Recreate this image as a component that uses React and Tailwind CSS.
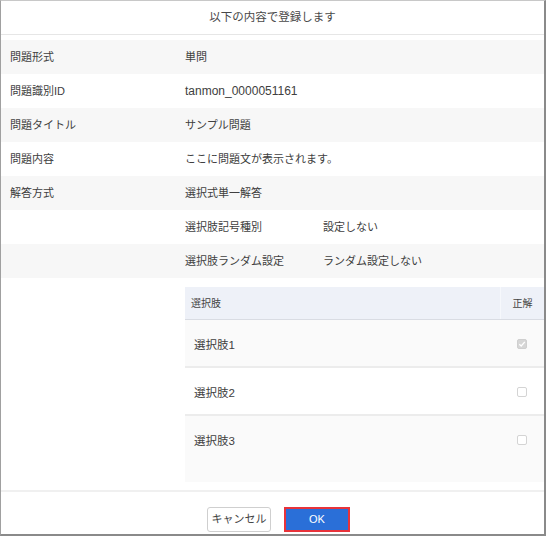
import React from "react";

const rows = [
    { label: "問題形式", value: "単問" },
    { label: "問題識別ID", value: "tanmon_0000051161" },
    { label: "問題タイトル", value: "サンプル問題" },
    { label: "問題内容", value: "ここに問題文が表示されます。" },
    { label: "解答方式", value: "選択式単一解答" },
];

const subRows = [
    { label: "選択肢記号種別", value: "設定しない" },
    { label: "選択肢ランダム設定", value: "ランダム設定しない" },
];

const choices = [
    { name: "選択肢1", correct: true, h: "h-[48px]", bg: "bg-[#fafafa]" },
    { name: "選択肢2", correct: false, h: "h-[48px]", bg: "bg-white" },
    { name: "選択肢3", correct: false, h: "h-[66px]", bg: "bg-[#fafafa]" },
];

function CheckBox({ checked }) {
    if (checked) {
        return (
            <div className="w-[10px] h-[10px] rounded-[2px] bg-[#d6d6d6] border border-[#cfcfcf] flex items-center justify-center">
                <svg width="8" height="8" viewBox="0 0 8 8">
                    <path d="M1.3 4.2 L3.2 6 L6.8 1.8" stroke="#fff" strokeWidth="1.3" fill="none" />
                </svg>
            </div>
        );
    }
    return <div className="w-[10px] h-[10px] rounded-[2px] bg-white border border-[#d4d4d4]"></div>;
}

export default function App() {
    return (
        <div
            className="w-[546px] h-[536px] bg-white border-l border-t border-r-2 border-b-2 border-l-[#a0a0a0] border-t-[#c8c8c8] border-r-[#8a8a8a] border-b-[#8a8a8a] flex flex-col text-[#404040] text-[11px]"
            style={{ fontFamily: '"Liberation Sans", "Noto Sans CJK JP", sans-serif' }}
        >
            <div className="h-[34px] shrink-0 border-b border-[#e6e6e6] flex items-center justify-center text-[11.5px] text-[#484848]">
                以下の内容で登録します
            </div>

            <div className="mt-[5px] flex flex-col">
                {rows.map((r, i) => (
                    <div key={r.label} className={"h-[34px] flex items-center " + (i % 2 === 0 ? "bg-[#f7f7f7]" : "bg-white")}>
                        <div className="w-[184px] pl-[9px]">{r.label}</div>
                        <div className={r.label === "問題識別ID" ? "text-[12px]" : ""}>{r.value}</div>
                    </div>
                ))}
                {subRows.map((r, i) => (
                    <div key={r.label} className={"h-[34px] flex items-center " + (i % 2 === 0 ? "bg-white" : "bg-[#f7f7f7]")}>
                        <div className="w-[184px]"></div>
                        <div className="w-[138px]">{r.label}</div>
                        <div>{r.value}</div>
                    </div>
                ))}
            </div>

            <div className="mt-[9px] ml-[184px] flex flex-col">
                <div className="h-[33px] flex bg-[#eef1f8] border-b border-[#d9dce3] text-[10px] text-[#444]">
                    <div className="flex-1 flex items-center pl-[6px]">選択肢</div>
                    <div className="w-[44px] flex items-center justify-center border-l border-[#f6f8fc]">正解</div>
                </div>
                {choices.map((c, i) => (
                    <div key={c.name} className={"flex " + c.h + " " + c.bg + (i < choices.length - 1 ? " border-b-2 border-[#ececec]" : "")}>
                        <div className="flex-1 pl-[9px] pt-[17px] text-[11.5px]">{c.name}</div>
                        <div className="w-[44px] flex justify-center pt-[19px]">
                            <CheckBox checked={c.correct} />
                        </div>
                    </div>
                ))}
            </div>

            <div className="mt-[8px] h-[2px] bg-[#f0f0f0]"></div>

            <div className="flex-1 flex items-start justify-center gap-[13px] pt-[15px] pl-[12px]">
                <button className="w-[64px] h-[25px] rounded-[3px] border border-[#cfcfcf] bg-white text-[11px] text-[#444]">
                    キャンセル
                </button>
                <button className="w-[66px] h-[25px] border-2 border-[#e8333a] bg-[#2a6fd8] text-white text-[11px]">
                    OK
                </button>
            </div>
        </div>
    );
}
